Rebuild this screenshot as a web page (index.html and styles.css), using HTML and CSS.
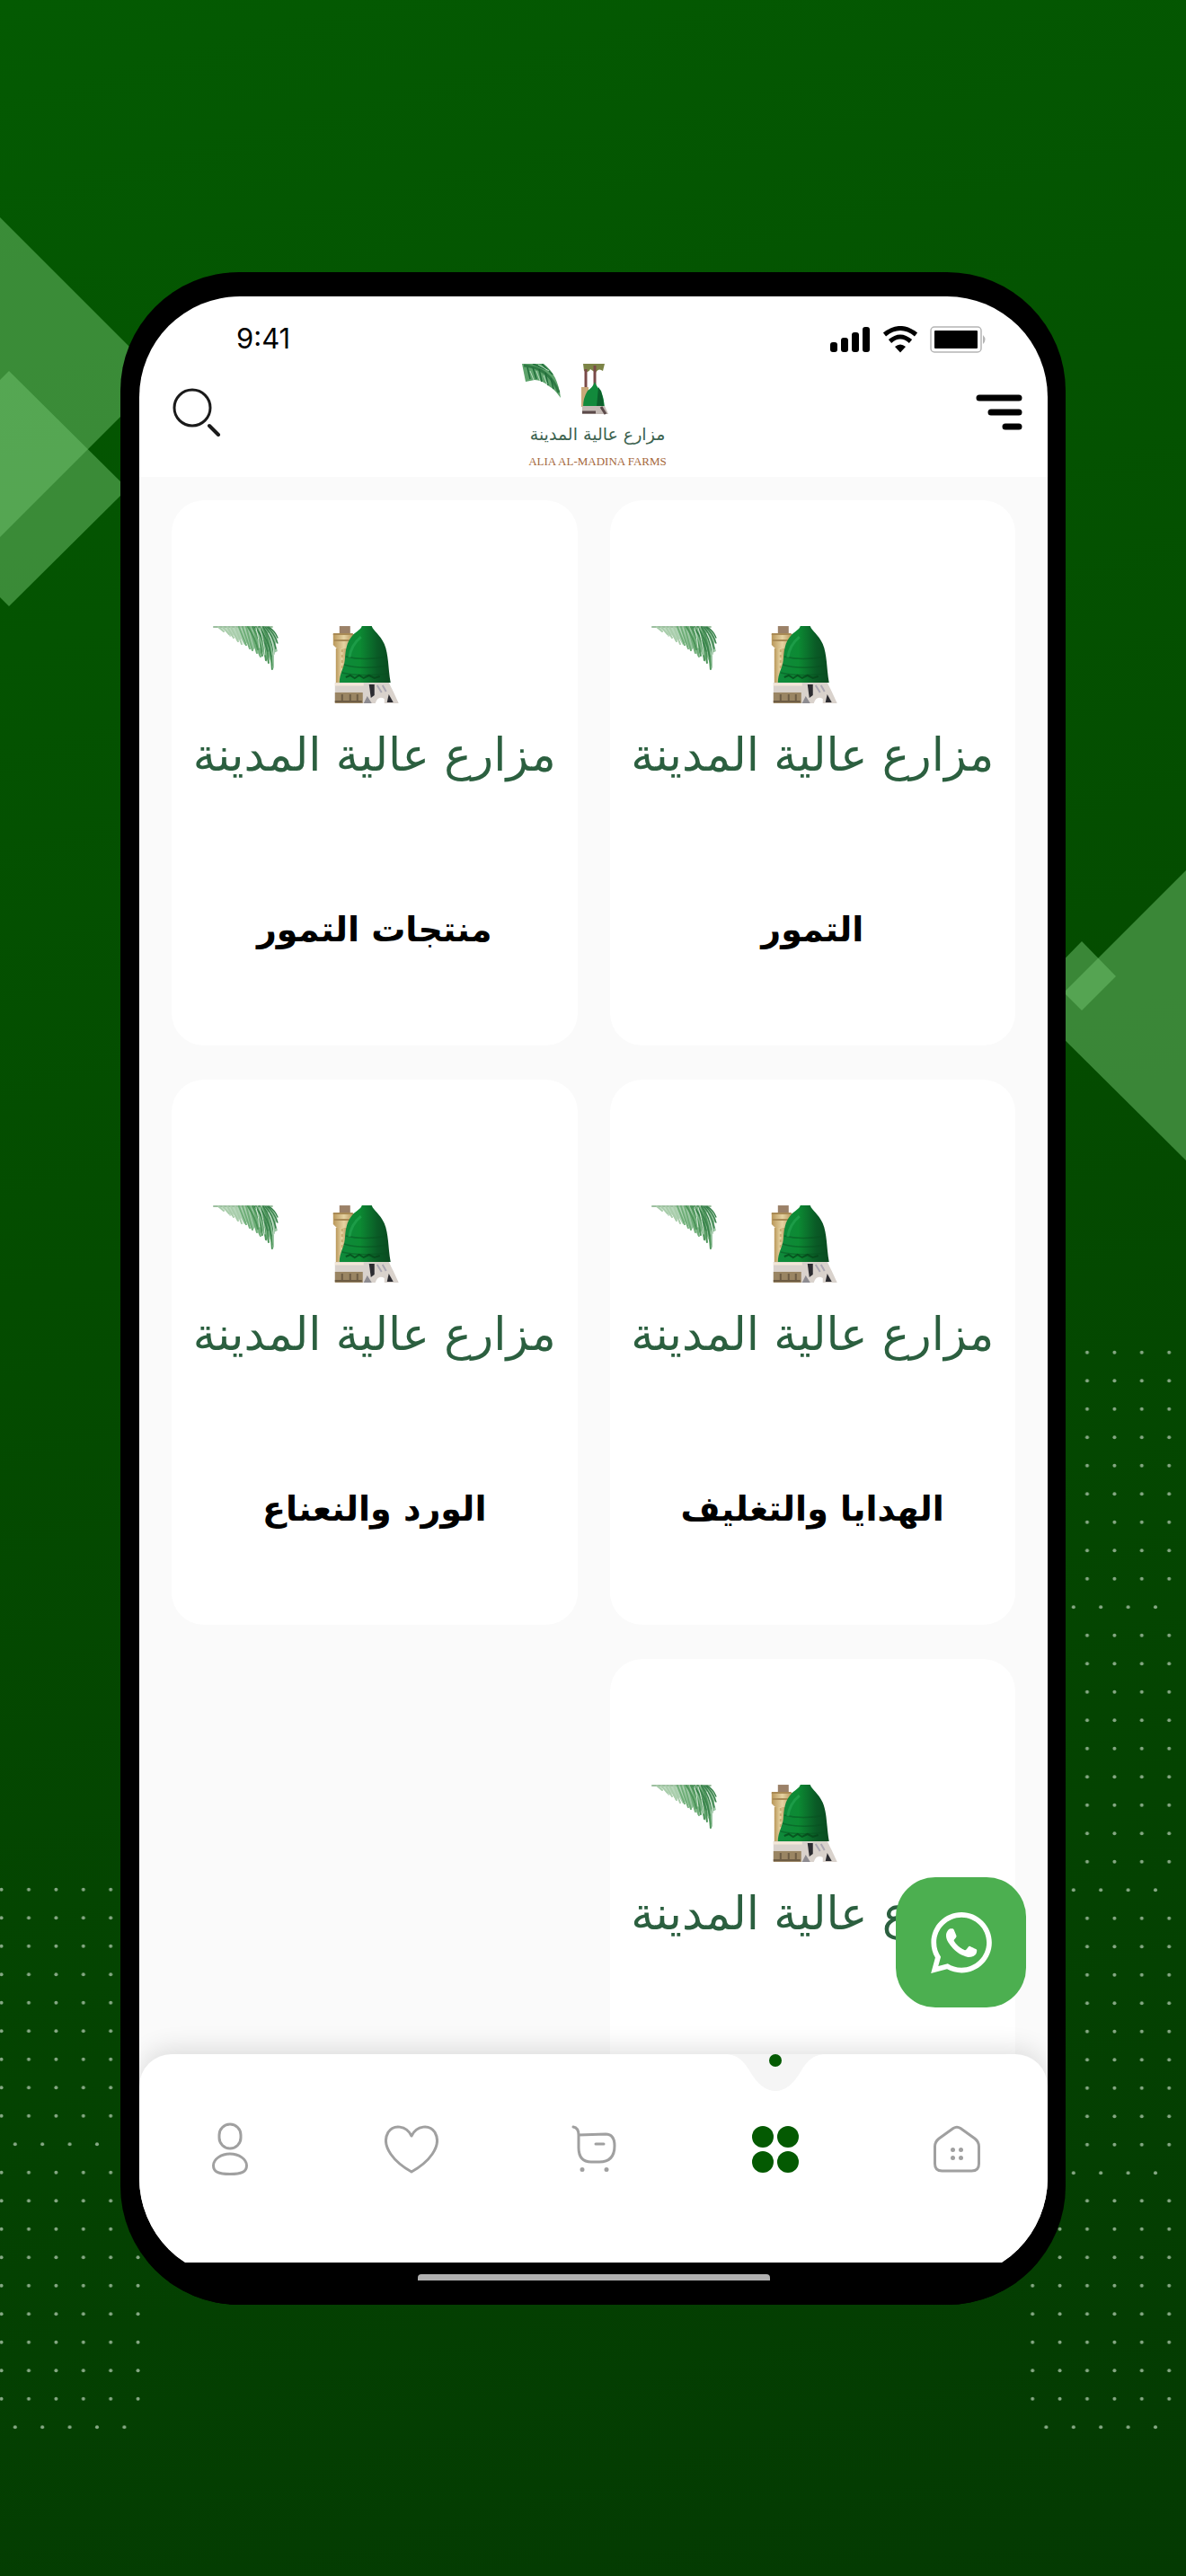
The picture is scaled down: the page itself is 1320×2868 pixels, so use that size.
FILE: index.html
```html
<!DOCTYPE html>
<html lang="ar" dir="rtl">
<head>
    <meta charset="UTF-8">
    <meta name="viewport" content="width=device-width, initial-scale=1.0">
    <title>مزارع عالية المدينة</title>
    <link rel="stylesheet" href="styles.css">
</head>
<body>
<!-- Shared drawings -->
<svg class="defs" width="0" height="0" aria-hidden="true">
    <defs>
        <linearGradient id="domeFill" x1="0" y1="0" x2="1" y2="0">
            <stop offset="0" stop-color="#0f8a3c"/>
            <stop offset="0.4" stop-color="#0c8a33"/>
            <stop offset="0.75" stop-color="#0a5a26"/>
            <stop offset="1" stop-color="#0a4a20"/>
        </linearGradient>
        <linearGradient id="towerFill" x1="0" y1="0" x2="1" y2="0">
            <stop offset="0" stop-color="#b9975a"/>
            <stop offset="0.5" stop-color="#e6d3a2"/>
            <stop offset="1" stop-color="#b08d4f"/>
        </linearGradient>
        <linearGradient id="leafFill" x1="0" y1="0" x2="1" y2="0">
            <stop offset="0" stop-color="#c4dcc6"/>
            <stop offset="0.5" stop-color="#8dc095"/>
            <stop offset="0.8" stop-color="#4f9a5e"/>
            <stop offset="1" stop-color="#7fb589"/>
        </linearGradient>
        <symbol id="brandArt" viewBox="0 0 404 86">
            <!-- palm leaf -->
            <path d="M22 0H84Q91 6 94 16L92 20L94 28L90 30L90 48L84 34L82 40L77 28L74 34L69 24L66 28L61 18L57 21L53 14L49 17L45 10L41 12L36 5Z" fill="url(#leafFill)" opacity="0.75"/>
            <g fill="none" stroke-linecap="round">
                <path d="M23 1H88" stroke="#9dbfa0" stroke-width="2"/>
                <path d="M28 1l6 5M33 1l7 8M38 1l7 12M42 1l8 16M47 1l7 19" stroke="#a9cdab" stroke-width="2"/>
                <path d="M51 1l8 20M55 1l8 24M59 1l7 26M63 1l8 29M67 1l8 33" stroke="#6fae78" stroke-width="2"/>
                <path d="M61 1q8 12 11 25M66 1q9 14 11 32M70 1q10 16 11 37M74 1q9 16 10 40M78 1q9 20 10 47" stroke="#4b9458" stroke-width="2"/>
                <path d="M68 1q10 10 15 27M73 1q10 12 14 33M78 1q9 12 12 30M80 1q9 9 12 24M82 1q8 6 12 18M84 1q7 4 10 12" stroke="#37804a" stroke-width="1.4"/>
                <path d="M74 2q5 14 6 30M70 2q3 10 4 22M84 8q6 12 6 24" stroke="#d6ead8" stroke-width="1"/>
            </g>
            <!-- minaret -->
            <rect x="163" y="0" width="12" height="8" fill="#9b8168"/>
            <path d="M156 9h24v12l-6 5h-13l-5-5z" fill="url(#towerFill)"/>
            <path d="M156 9h22M157 16h20" stroke="#a98a55" stroke-width="2"/>
            <rect x="159" y="25" width="13" height="44" fill="url(#towerFill)"/>
            <path d="M166 26v42" stroke="#c8ab6f" stroke-width="2" stroke-dasharray="3 3"/>
            <!-- dome -->
            <path d="M188 0h11c2 6 9 9 14 20c5 12 4 26 7 43h-57c0-10 5-16 6-25c1-17 4-22 9-28c5-5 9-6 10-10z" fill="url(#domeFill)"/>
            <path d="M170 34q20 5 46 0M168 43q20 6 49 1M166 52q22 5 52 1" fill="none" stroke="#07501f" stroke-width="1.4" opacity="0.5"/>
            <path d="M187 12q-11 9-13 23" fill="none" stroke="#27a853" stroke-width="3" opacity="0.6"/>
            <path d="M170 57l5-2 5 3 5-3 5 3 6-3 6 3 6-2" fill="none" stroke="#054218" stroke-width="2" opacity="0.7"/>
            <!-- base -->
            <path d="M158 63h60l5 10l6 13h-71z" fill="#d9d2cc"/>
            <path d="M158 65h32" stroke="#f3e7d8" stroke-width="3"/>
            <path d="M158 74h31v12h-31z" fill="#9a8563"/>
            <path d="M158 84h30M166 76v8M175 76v8M183 76v8" stroke="#6d5c44" stroke-width="2"/>
            <path d="M196 65h6v12l-4 3z" fill="#2c2c31"/>
            <path d="M216 85l2-9l5 9z" fill="#2c2c31"/>
            <path d="M190 86l4-8 5 8z" fill="#8d8b90"/>
            <path d="M203 86q3-9 10-5v5z" fill="#fff"/>
            <path d="M205 66l5 8M211 66l4 7" stroke="#aaa6b2" stroke-width="2"/>
        </symbol>
    </defs>
</svg>

<div class="stage">
    <!-- Background decoration -->
    <svg class="decor decor-left" width="180" height="2868" viewBox="0 0 180 2868" aria-hidden="true">
        <defs>
            <pattern id="dotsLeft" x="-13.6" y="2088" width="30.4" height="315" patternUnits="userSpaceOnUse">
                <g fill="#86a884">
                    <circle cx="15.2" cy="15.7" r="2"/><circle cx="15.2" cy="47.2" r="2"/><circle cx="15.2" cy="78.7" r="2"/>
                    <circle cx="15.2" cy="110.2" r="2"/><circle cx="15.2" cy="141.7" r="2"/><circle cx="15.2" cy="173.2" r="2"/>
                    <circle cx="15.2" cy="204.7" r="2"/><circle cx="15.2" cy="236.2" r="2"/><circle cx="15.2" cy="267.7" r="2"/>
                    <circle cx="0" cy="299.2" r="2"/><circle cx="30.4" cy="299.2" r="2"/>
                </g>
            </pattern>
        </defs>
        <g fill="#70c26e" fill-opacity="0.5">
            <path d="M0 242L178 420L0 598z"/>
            <path d="M0 423L10 413L142 544L10 675L0 665z"/>
        </g>
        <rect x="0" y="2088" width="156" height="630" fill="url(#dotsLeft)"/>
    </svg>
    <svg class="decor decor-right" width="180" height="2868" viewBox="1140 0 180 2868" aria-hidden="true">
        <defs>
            <pattern id="dotsRight" href="#dotsLeft" x="1134" y="1490"/>
            <pattern id="dotsRightEnd" href="#dotsLeft" x="1134" y="2088"/>
        </defs>
        <g fill="#70c26e" fill-opacity="0.5">
            <path d="M1320 969L1158 1131L1320 1292z"/>
            <path d="M1204 1048L1242 1087L1204 1125L1166 1087z"/>
        </g>
        <rect x="1145" y="1490" width="160" height="945" fill="url(#dotsRight)"/>
        <rect x="1145" y="2435" width="160" height="283" fill="url(#dotsRightEnd)"/>
    </svg>

    <div class="phone">
        <div class="screen">
            <!-- Status bar -->
            <div class="status-bar" dir="ltr">
                <span class="time">9:41</span>
                <div class="status-icons">
                    <svg width="45" height="30" viewBox="0 0 45 30" aria-hidden="true">
                        <rect x="0" y="18" width="8" height="11" rx="3"/>
                        <rect x="12" y="13" width="8" height="16" rx="3"/>
                        <rect x="24" y="7" width="8" height="22" rx="3"/>
                        <rect x="36" y="1" width="8" height="28" rx="3"/>
                    </svg>
                    <svg width="40" height="30" viewBox="0 0 40 30" aria-hidden="true">
                        <path d="M2.500 9.500Q20-4.500 37.500 9.500" fill="none" stroke="#000" stroke-width="5"/>
                        <path d="M8.500 17Q20 7 31.500 17" fill="none" stroke="#000" stroke-width="5"/>
                        <path d="M14 23q6-5 12 0l-6 6.500z"/>
                    </svg>
                    <svg width="65" height="30" viewBox="0 0 65 30" aria-hidden="true">
                        <rect x="1" y="1" width="56" height="28" rx="4" fill="none" stroke="#b5b5b5" stroke-width="1.500"/>
                        <rect x="5" y="5" width="48" height="20" rx="1"/>
                        <path d="M59 10q5 5 0 10z" fill="#b5b5b5"/>
                    </svg>
                </div>
            </div>

            <!-- Header -->
            <header class="header">
                <button class="icon-btn menu-btn" type="button" aria-label="القائمة">
                    <svg width="52" height="40" viewBox="0 0 52 40" fill="none" stroke="#000" stroke-width="7" stroke-linecap="round" aria-hidden="true">
                        <path d="M4 4H48M17 20H48M33 36H48"/>
                    </svg>
                </button>
                <a class="logo" href="#">
                    <svg width="168" height="58" viewBox="0 0 168 58" aria-hidden="true">
                        <path d="M0 0H24Q40 12 43 38Q36 28 30 25Q22 18 14 18L4 20Z" fill="#5da36b"/>
                        <path d="M2 2Q30 4 41 32" fill="none" stroke="#2f7a44" stroke-width="3"/>
                        <path d="M6 4l3 13M12 4l4 13M19 6l3 14M26 10l3 14M32 16l3 12M12 0l14 6M22 0l12 12" stroke="#1f6d3a" stroke-width="1.500"/>
                        <path d="M9 8l4 10M16 8l4 11M24 13l4 10M18 1l12 7" stroke="#b8dcbf" stroke-width="1"/>
                        <path d="M68 0h24l-2 8q-5-4-8 2l-6-4q-2 5-7 2z" fill="#7c8446"/>
                        <path d="M81 2v22M71 6v26" stroke="#7a4a48" stroke-width="3"/>
                        <path d="M66 26h8v22h-8z" fill="#c9a979"/>
                        <path d="M81 20q2 6 7 10q3 8 4 18H68q0-10 5-18q6-4 8-10z" fill="#128a3c"/>
                        <path d="M85 26q5 6 6 22h-8z" fill="#0b5f2b"/>
                        <path d="M67 47h25l4 9h-29z" fill="#c4bab5"/>
                        <path d="M67 54h15M88 48l5 8" stroke="#5b4a4a" stroke-width="3"/>
                    </svg>
                    <span class="logo-ar">مزارع عالية المدينة</span>
                    <span class="logo-en" dir="ltr">ALIA AL-MADINA FARMS</span>
                </a>
                <button class="icon-btn search-btn" type="button" aria-label="بحث">
                    <svg width="54" height="54" viewBox="0 0 54 54" fill="none" stroke="#1a1a1a" stroke-linecap="round" aria-hidden="true">
                        <circle cx="22" cy="22" r="20" stroke-width="3"/>
                        <path d="M41 42L51 52" stroke-width="4"/>
                    </svg>
                </button>
            </header>

            <!-- Categories -->
            <main class="categories">
                <a class="card" href="#">
                    <span class="brand"><svg class="brand-art" aria-hidden="true"><use href="#brandArt"/></svg><span class="brand-name">مزارع عالية المدينة</span></span>
                    <h2>التمور</h2>
                </a>
                <a class="card" href="#">
                    <span class="brand"><svg class="brand-art" aria-hidden="true"><use href="#brandArt"/></svg><span class="brand-name">مزارع عالية المدينة</span></span>
                    <h2>منتجات التمور</h2>
                </a>
                <a class="card" href="#">
                    <span class="brand"><svg class="brand-art" aria-hidden="true"><use href="#brandArt"/></svg><span class="brand-name">مزارع عالية المدينة</span></span>
                    <h2>الهدايا والتغليف</h2>
                </a>
                <a class="card" href="#">
                    <span class="brand"><svg class="brand-art" aria-hidden="true"><use href="#brandArt"/></svg><span class="brand-name">مزارع عالية المدينة</span></span>
                    <h2>الورد والنعناع</h2>
                </a>
                <a class="card" href="#">
                    <span class="brand"><svg class="brand-art" aria-hidden="true"><use href="#brandArt"/></svg><span class="brand-name">مزارع عالية المدينة</span></span>
                </a>
            </main>

            <a class="whatsapp" href="#" aria-label="واتساب">
                <svg width="68" height="68" viewBox="0 0 24 24" fill="#fff" aria-hidden="true">
                    <path d="M.057 24l1.687-6.163c-1.041-1.804-1.588-3.849-1.587-5.946.003-6.556 5.338-11.891 11.893-11.891 3.181.001 6.167 1.240 8.413 3.488 2.245 2.248 3.481 5.236 3.480 8.414-.003 6.557-5.338 11.892-11.893 11.892-1.990-.001-3.951-.500-5.688-1.448l-6.305 1.654zm6.597-3.807c1.676.995 3.276 1.591 5.392 1.592 5.448 0 9.886-4.434 9.889-9.885.002-5.462-4.415-9.890-9.881-9.892-5.452 0-9.887 4.434-9.889 9.884-.001 2.225.651 3.891 1.746 5.634l-.999 3.648 3.742-.981z"/>
                    <path d="M17.472 14.382c-.297-.149-1.758-.867-2.030-.967-.273-.099-.471-.148-.67.150-.197.297-.767.966-.940 1.164-.173.199-.347.223-.644.075-.297-.150-1.255-.463-2.390-1.475-.883-.788-1.480-1.761-1.653-2.059-.173-.297-.018-.458.130-.606.134-.133.298-.347.446-.520.149-.174.198-.298.298-.497.099-.198.050-.371-.025-.520-.075-.149-.669-1.612-.916-2.207-.242-.579-.487-.500-.669-.510-.173-.008-.371-.010-.570-.010-.198 0-.520.074-.792.372-.272.297-1.040 1.016-1.040 2.479 0 1.462 1.065 2.875 1.213 3.074.149.198 2.096 3.200 5.077 4.487.709.306 1.262.489 1.694.625.712.227 1.360.195 1.871.118.571-.085 1.758-.719 2.006-1.413.248-.694.248-1.289.173-1.413-.074-.124-.272-.198-.570-.347z"/>
                </svg>
            </a>

            <!-- Bottom navigation -->
            <nav class="tab-bar">
                <a href="#" aria-label="الرئيسية">
                    <svg width="60" height="60" viewBox="0 0 60 60" aria-hidden="true">
                        <path d="M26 6.500q4-2.500 8 0L50 18q4.500 3.500 4.500 9v19q0 8-8 8h-33q-8 0-8-8V27q0-5.500 4.500-9z"/>
                        <path class="dots" d="M25.500 30.500h.01M34.500 30.500h.01M25.500 39.500h.01M34.500 39.500h.01"/>
                    </svg>
                </a>
                <a class="active" href="#" aria-label="الأقسام">
                    <svg class="notch" width="116" height="42" viewBox="0 0 116 42" aria-hidden="true">
                        <path d="M0 0C16 0 22 7 29 18Q42 41 58 41T87 18C94 7 100 0 116 0z" fill="#f5f5f5"/>
                        <circle cx="58" cy="7" r="7" fill="#045a02"/>
                    </svg>
                    <svg width="60" height="60" viewBox="0 0 60 60" aria-hidden="true">
                        <g fill="#045a02" stroke="none">
                            <circle cx="16" cy="16" r="12"/><circle cx="44" cy="16" r="12"/>
                            <circle cx="16" cy="44" r="12"/><circle cx="44" cy="44" r="12"/>
                        </g>
                    </svg>
                </a>
                <a href="#" aria-label="السلة">
                    <svg width="60" height="60" viewBox="0 0 60 60" aria-hidden="true">
                        <path d="M7 5q6 1 6 9v14q0 16 14 16h9q17 0 17-18q0-13-10-13l-30 1"/>
                        <path d="M32 24h9"/>
                        <path class="dots" d="M17 52.500h.01M44 52.500h.01"/>
                    </svg>
                </a>
                <a href="#" aria-label="المفضلة">
                    <svg width="60" height="60" viewBox="0 0 60 60" aria-hidden="true">
                        <path d="M30 15C24 3 10 2 4 11C-5 27 12 45 30 55C48 45 65 27 56 11C50 2 36 3 30 15z"/>
                    </svg>
                </a>
                <a href="#" aria-label="حسابي">
                    <svg width="60" height="60" viewBox="0 0 60 60" aria-hidden="true">
                        <rect x="18" y="2" width="24" height="27" rx="12"/>
                        <path d="M30 35C20 35 11.500 41 11.500 48S17 57.500 30 57.500S48.500 55 48.500 48S40 35 30 35z"/>
                    </svg>
                </a>
            </nav>
        </div>
        <div class="chin">
            <div class="home-bar"></div>
        </div>
    </div>
</div>
</body>
</html>
```
FILE: styles.css
```css
* {
    box-sizing: border-box;
}

body {
    margin: 0;
    font-family: "DejaVu Sans", "Noto Sans", sans-serif;
    color: #000;
}

a {
    color: inherit;
    text-decoration: none;
}

.defs {
    position: absolute;
}

/* Background */
.stage {
    position: relative;
    display: flex;
    height: 100vh;
    padding: 303px 134px 302px;
    overflow: hidden;
    background: linear-gradient(165deg, #045a02, #044c00 45%, #043a02);
}

.decor {
    position: absolute;
    top: 0;
}

.decor-left {
    left: 0;
}

.decor-right {
    right: 0;
}

/* Phone */
.phone {
    position: relative;
    flex: 1;
    display: flex;
    flex-direction: column;
    min-width: 0;
    padding: 27px 20px 0 21px;
    overflow: hidden;
    background: #000;
    border-radius: 132px;
}

.screen {
    position: relative;
    flex: 1;
    display: flex;
    flex-direction: column;
    min-height: 0;
    overflow: hidden;
    background: #fff;
    border-radius: 112px;
}

/* Covers the bottom edge of the screen */
.chin {
    position: relative;
    height: 47px;
    margin-top: -18px;
    padding-top: 13px;
    background: #000;
}

.home-bar {
    width: 392px;
    height: 7px;
    margin: 0 auto;
    background: #b0b0b0;
    border-radius: 4px 4px 0 0;
}

/* Status bar */
.status-bar {
    display: flex;
    justify-content: space-between;
    align-items: flex-end;
    height: 63px;
    padding: 0 66px 0 108px;
}

.time {
    font-family: Inter, sans-serif;
    font-size: 31px;
    line-height: 32px;
}

.status-icons {
    display: flex;
    gap: 13px;
}

/* Header */
.header {
    display: flex;
    align-items: center;
    height: 138px;
    padding: 0 28px 6px;
}

.icon-btn {
    display: flex;
    flex: 1;
    padding: 0;
    border: 0;
    background: none;
}

.menu-btn {
    justify-content: flex-start;
}

.search-btn {
    justify-content: flex-end;
    padding-left: 9px;
}

.logo {
    display: flex;
    flex-direction: column;
    align-items: center;
    align-self: flex-start;
    padding-top: 12px;
}

.logo-ar {
    font-size: 19px;
    line-height: 40px;
    color: #3d6350;
    white-space: nowrap;
}

.logo-en {
    font-family: "Liberation Serif", serif;
    font-size: 13px;
    line-height: 22px;
    color: #a5673c;
    white-space: nowrap;
}

/* Categories */
.categories {
    flex: 1;
    display: grid;
    grid-template-columns: 1fr 1fr;
    grid-auto-rows: 607px;
    gap: 38px 36px;
    min-height: 0;
    padding: 26px 36px;
    overflow: hidden;
    background: #fafafa;
}

.card {
    display: flex;
    flex-direction: column;
    align-items: center;
    min-width: 0;
    padding: 140px 24px 0;
    background: #fff;
    border-radius: 36px;
}

.brand {
    display: flex;
    flex-direction: column;
    align-items: center;
    width: 100%;
}

.brand-art {
    width: 100%;
    height: 86px;
}

.brand-name {
    font-size: 51px;
    line-height: 116px;
    color: #2b5f3f;
    white-space: nowrap;
}

.card h2 {
    margin: 104px 0 0;
    font-size: 38px;
    font-weight: bold;
    line-height: 64px;
    white-space: nowrap;
}

/* WhatsApp button */
.whatsapp {
    position: absolute;
    right: 24px;
    bottom: 302px;
    display: flex;
    justify-content: center;
    align-items: center;
    width: 145px;
    height: 145px;
    background: #4caf50;
    border-radius: 44px;
}

/* Bottom navigation */
.tab-bar {
    position: relative;
    display: flex;
    flex: none;
    height: 250px;
    margin-top: -44px;
    background: #fff;
    border-radius: 36px 36px 0 0;
    box-shadow: 0 -6px 28px rgba(0, 0, 0, 0.12);
}

.tab-bar a {
    position: relative;
    flex: 1;
    display: flex;
    justify-content: center;
    align-items: center;
    padding-bottom: 38px;
}

.tab-bar svg {
    fill: none;
    stroke: #a0a0a0;
    stroke-width: 3;
    stroke-linecap: round;
    stroke-linejoin: round;
}

.tab-bar .dots {
    stroke-width: 5;
}

.tab-bar .notch {
    position: absolute;
    top: 0;
    left: 50%;
    transform: translateX(-50%);
    stroke: none;
}
```
